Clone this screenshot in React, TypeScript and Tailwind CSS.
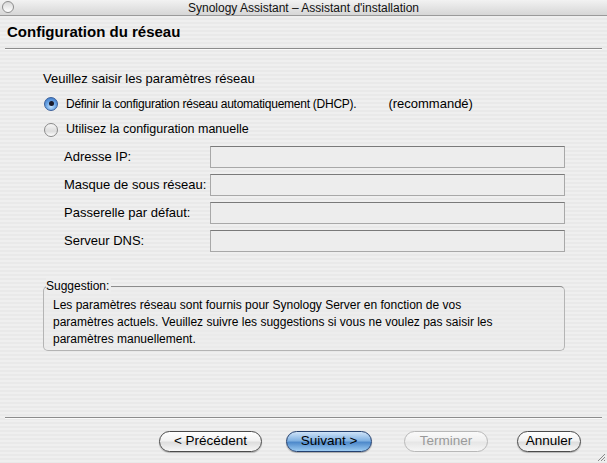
import React from 'react';

const font = { fontFamily: '"Liberation Sans", Arial, sans-serif' };

const Radio = ({ checked }: { checked?: boolean }) => (
  <span
    className={`relative inline-flex h-[14px] w-[14px] shrink-0 items-center justify-center rounded-full border ${
      checked
        ? 'border-[#3a5f9a] bg-[radial-gradient(circle_at_50%_70%,#c6e4ff_0%,#6fa8e6_45%,#2f6cc0_100%)]'
        : 'border-[#8a8a8a] bg-[linear-gradient(#f6f6f6,#dcdcdc_60%,#ffffff)]'
    }`}
  >
    {checked && <span className="h-[5px] w-[5px] rounded-full bg-[#1a1a2a]" />}
  </span>
);

const Field = ({ label }: { label: string }) => (
  <div className="flex h-[22px] items-center">
    <span className="w-[146px] text-[13px] text-black">{label}</span>
    <div className="h-[22px] w-[355px] border border-[#a8a8a8] border-t-[#7a7a7a] bg-[#ededed]" />
  </div>
);

type BtnKind = 'normal' | 'default' | 'disabled';

const AquaButton = ({ label, kind = 'normal', width }: { label: string; kind?: BtnKind; width: string }) => {
  const styles: Record<BtnKind, string> = {
    normal:
      'border-[#4a4a4a] text-black bg-[linear-gradient(#ffffff,#f2f2f2_45%,#dedede_55%,#f7f7f7)] shadow-[0_1px_1px_rgba(0,0,0,0.25)]',
    default:
      'border-[#24406e] text-black bg-[linear-gradient(#cfe3f8,#82b2e2_45%,#4f8acb_55%,#9ccbf2)] shadow-[0_1px_1px_rgba(0,0,0,0.3)]',
    disabled:
      'border-[#b8b8b8] text-[#9a9a9a] bg-[linear-gradient(#fafafa,#f0f0f0_45%,#e6e6e6_55%,#f6f6f6)]',
  };
  return (
    <div
      className={`flex h-[21px] items-center justify-center rounded-full border text-[13.5px] ${width} ${styles[kind]}`}
    >
      {label}
    </div>
  );
};

export default function App() {
  return (
    <div
      style={font}
      className="flex h-[463px] w-[607px] flex-col overflow-hidden bg-[repeating-linear-gradient(#efefef_0px,#efefef_2px,#e9e9e9_2px,#e9e9e9_4px)] text-black"
    >
      {/* title bar */}
      <div className="relative flex h-[16px] shrink-0 items-center justify-center border-b border-[#9a9a9a] bg-[linear-gradient(#f2f2f2,#d6d6d6)] text-[12px] text-[#111]">
        <span className="absolute left-[2px] top-[1px] h-[12px] w-[12px] rounded-full border border-[#8c8c8c] bg-[linear-gradient(#d8d8d8,#ffffff)]" />
        Synology Assistant – Assistant d'installation
      </div>

      {/* header */}
      <div className="flex h-[32px] shrink-0 items-center pl-[7px] text-[15px] font-bold">Configuration du réseau</div>
      <div className="mx-[5px] h-[2px] shrink-0 border-t border-[#8c8c8c] border-b border-b-[#fafafa]" />

      {/* content */}
      <div className="flex flex-col pl-[43px] pt-[21px]">
        <div className="h-[16px] text-[13px] leading-[16px]">Veuillez saisir les paramètres réseau</div>
        <div className="mt-[8px] flex h-[17px] items-center gap-[8px] pl-[1px] text-[12px]">
          <Radio checked />
          <span className="tracking-[-0.25px]">Définir la configuration réseau automatiquement (DHCP).</span>
          <span className="ml-[24px] text-[13px]">(recommandé)</span>
        </div>
        <div className="mt-[9px] flex h-[17px] items-center gap-[8px] pl-[1px] text-[12.5px]">
          <Radio />
          <span>Utilisez la configuration manuelle</span>
        </div>

        <div className="mt-[8px] flex flex-col gap-[6px] pl-[21px]">
          <Field label="Adresse IP:" />
          <Field label="Masque de sous réseau:" />
          <Field label="Passerelle par défaut:" />
          <Field label="Serveur DNS:" />
        </div>

        {/* suggestion group */}
        <div className="relative mt-[34px] h-[65px] w-[522px] rounded-[5px] border border-[#b4b4b4] border-t-[#8c8c8c] bg-[#ebebeb]/40 px-[9px] pt-[10px] text-[12px] leading-[17px]">
          <span className="absolute left-[2px] top-[-9px] bg-[#ededed] pr-[2px] text-[12px] leading-[16px]">Suggestion:</span>
          Les paramètres réseau sont fournis pour Synology Server en fonction de vos
          <br />
          paramètres actuels. Veuillez suivre les suggestions si vous ne voulez pas saisir les
          <br />
          paramètres manuellement.
        </div>
      </div>

      <div className="flex-1" />

      {/* footer */}
      <div className="mx-[5px] h-[2px] shrink-0 border-t border-[#8c8c8c] border-b border-b-[#fafafa]" />
      <div className="relative flex h-[44px] shrink-0 items-center justify-end pr-[26px]">
        <div className="flex items-center gap-[24px]">
          <AquaButton label="< Précédent" width="w-[103px]" />
          <div className="flex items-center gap-[32px]">
            <AquaButton label="Suivant >" kind="default" width="w-[86px]" />
            <div className="flex items-center gap-[29px]">
              <AquaButton label="Terminer" kind="disabled" width="w-[84px]" />
              <AquaButton label="Annuler" width="w-[64px]" />
            </div>
          </div>
        </div>
        <svg className="absolute bottom-[1px] right-[1px]" width="11" height="11" viewBox="0 0 11 11">
          <path d="M10 3 L3 10 M10 6 L6 10 M10 9 L9 10" stroke="#8a8a8a" strokeWidth="1" />
        </svg>
      </div>
    </div>
  );
}
